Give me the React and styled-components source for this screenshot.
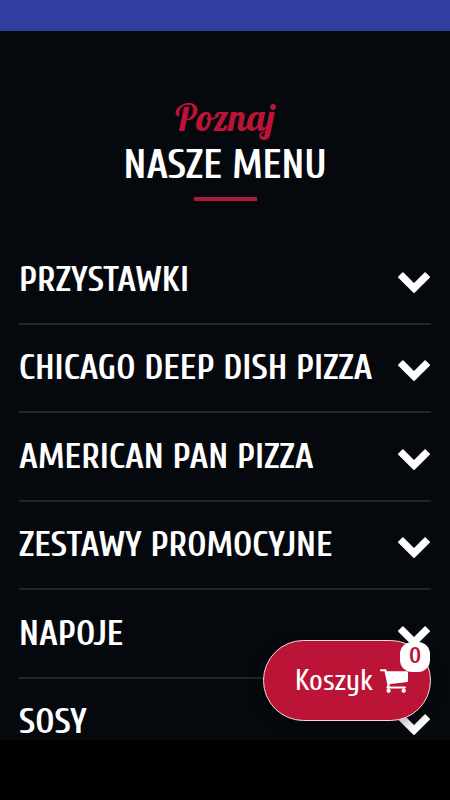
import React, { useState } from "react";
import styled, { createGlobalStyle } from "styled-components";

const GlobalStyle = createGlobalStyle`
  * {
    box-sizing: border-box;
  }
  body {
    margin: 0;
    background: #000;
    font-family: "Cuprum", "Roboto", sans-serif;
  }
`;

const Screen = styled.div`
  height: 800px;
  display: flex;
  flex-direction: column;
  overflow: hidden;
  background: #000;
`;

const StatusBar = styled.div`
  flex: none;
  height: 31px;
  background: #303f9f;
`;

const Page = styled.main`
  position: relative;
  flex: none;
  height: 709px;
  padding: 61px 19px 0;
  overflow: hidden;
  color: #fff;
  background: #05080d;
`;

const Heading = styled.header`
  display: flex;
  flex-direction: column;
  align-items: center;
`;

const Kicker = styled.span`
  font-family: "Lobster", "Liberation Serif", cursive;
  font-size: 37px;
  line-height: 50px;
  color: #bc1436;
`;

const Title = styled.h1`
  margin: 1px 0 0;
  font-size: 40px;
  line-height: 44px;
  font-weight: 600;
`;

const Underline = styled.span`
  width: 63px;
  height: 4px;
  margin-top: 10px;
  background: #ab1c38;
`;

const Menu = styled.ul`
  margin: 35px 0 0;
  padding: 0;
  list-style: none;
`;

const Category = styled.li`
  height: 88.6px;
  border-bottom: 2px solid #222529;
`;

const CategoryButton = styled.button`
  display: flex;
  justify-content: space-between;
  align-items: center;
  width: 100%;
  height: 87px;
  padding: 0 1px 0 0;
  border: none;
  background: none;
  color: inherit;
  font: inherit;
  text-align: left;
  cursor: pointer;
`;

const CategoryName = styled.span`
  font-size: 35px;
  font-weight: 600;
  line-height: 40px;
  white-space: nowrap;
`;

const Chevron = styled.svg`
  flex: none;
  width: 32px;
  height: 21px;
  margin-top: 5px;
  fill: #fff;
  transform: ${({ $open }) => ($open ? "rotate(180deg)" : "none")};
`;

const CartButton = styled.button`
  position: absolute;
  right: 19px;
  bottom: 19px;
  display: flex;
  align-items: center;
  gap: 7px;
  width: 168px;
  height: 81px;
  padding: 0 0 0 31px;
  border: 1px solid #f3dce1;
  border-radius: 41px;
  background: #bc1436;
  box-shadow: 0 5px 14px rgba(0, 0, 0, 0.3);
  color: #fff;
  font-family: inherit;
  font-size: 30px;
  cursor: pointer;
`;

const CartIcon = styled.svg`
  width: 28px;
  height: 24px;
  fill: #fff;
`;

const Badge = styled.span`
  position: absolute;
  top: 1px;
  right: 0;
  width: 30px;
  height: 30px;
  border-radius: 12px;
  background: #fff;
  color: #bc1436;
  font-size: 23px;
  font-weight: 600;
  line-height: 28px;
  text-align: center;
`;

const categories = [
  "PRZYSTAWKI",
  "CHICAGO DEEP DISH PIZZA",
  "AMERICAN PAN PIZZA",
  "ZESTAWY PROMOCYJNE",
  "NAPOJE",
  "SOSY",
];

export default function App() {
  const [open, setOpen] = useState(null);

  const handleToggle = (name) => {
    setOpen(open === name ? null : name);
  };

  return (
    <Screen>
      <GlobalStyle />
      <StatusBar />
      <Page>
        <Heading>
          <Kicker>Poznaj</Kicker>
          <Title>NASZE MENU</Title>
          <Underline />
        </Heading>
        <Menu>
          {categories.map((name) => (
            <Category key={name}>
              <CategoryButton onClick={() => handleToggle(name)}>
                <CategoryName>{name}</CategoryName>
                <Chevron viewBox="0 0 32 21" $open={open === name}>
                  <path d="M.3 4.6 4.300.6q.6-.6 1.200 0L16 11.100 26.500.6q.6-.6 1.200 0l4 4q.6.6 0 1.200L16.600 20.700q-.6.6-1.200 0L.3 5.800q-.6-.6 0-1.200Z" />
                </Chevron>
              </CategoryButton>
            </Category>
          ))}
        </Menu>
        <CartButton>
          Koszyk
          <CartIcon viewBox="64 256 1664 1408">
            <path d="M704 1536q0 52-38 90t-90 38-90-38-38-90 38-90 90-38 90 38 38 90zm896 0q0 52-38 90t-90 38-90-38-38-90 38-90 90-38 90 38 38 90zm128-1088v512q0 24-16.500 42.500t-40.500 21.500l-1044 122q13 60 13 70 0 16-24 64h920q26 0 45 19t19 45-19 45-45 19h-1024q-26 0-45-19t-19-45q0-11 8-31.500t16-36 21.500-40 15.500-29.500l-177-823h-204q-26 0-45-19t-19-45 19-45 45-19h256q16 0 28.500 6.500t19.500 15.500 13 24.500 8 26 5.500 29.500 4.500 26h1201q26 0 45 19t19 45z" />
          </CartIcon>
          <Badge>0</Badge>
        </CartButton>
      </Page>
    </Screen>
  );
}
